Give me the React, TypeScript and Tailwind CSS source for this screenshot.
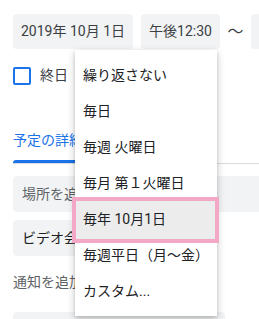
import React from 'react'

const repeatOptions = [
  '繰り返さない',
  '毎日',
  '毎週 火曜日',
  '毎月 第１火曜日',
  '毎年 10月1日',
  '毎週平日（月〜金）',
  'カスタム...',
]

export default function App() {
  const selected = 4

  return (
    <div
      className="relative w-[259px] h-[319px] overflow-hidden bg-white text-[14px] text-[#3c4043]"
      style={{ fontFamily: 'Roboto, "Noto Sans CJK JP", sans-serif' }}
    >
      <div className="pl-[13px] pt-[14px]">
        {/* date / time row */}
        <div className="flex items-center">
          <div className="shrink-0 h-[35px] px-2 flex items-center rounded bg-[#f1f3f4]">2019年 10月 1日</div>
          <div className="shrink-0 ml-2 h-[35px] px-2 flex items-center rounded bg-[#f1f3f4]">午後12:30</div>
          <div className="shrink-0 w-[31px] text-center text-[16px]">〜</div>
          <div className="shrink-0 h-[35px] px-2 flex items-center rounded bg-[#f1f3f4]">午後1:30</div>
        </div>

        {/* all day */}
        <div className="mt-4 flex items-center gap-[9px]">
          <div className="w-[18px] h-[18px] rounded-[2px] border-2 border-[#1a73e8]" />
          <span>終日</span>
        </div>

        {/* tabs */}
        <div className="mt-[34px] flex border-b border-[#dadce0]">
          <div className="flex flex-col">
            <div className="h-[40px] pr-4 flex items-center text-[#1a73e8]">予定の詳細</div>
            <div className="h-[3px] rounded-t-[3px] bg-[#1a73e8]" />
          </div>
        </div>

        <div className="mt-3 h-[36px] px-[9px] flex items-center rounded-l bg-[#f1f3f4] text-[#5f6368]">場所を追加</div>
        <div className="mt-2 w-[200px] h-[36px] px-[9px] flex items-center rounded bg-[#f1f3f4] text-[#202124]">
          ビデオ会議を追加
        </div>
        <div className="mt-4 h-[20px] flex items-center text-[#5f6368]">通知を追加</div>
        <div className="mt-5 w-[212px] h-[30px] rounded bg-[#f1f3f4] flex pl-[172px] pt-[7px]">
          <div className="w-[10px] h-[10px] rounded-full bg-[#7b1fa2]" />
        </div>
      </div>

      {/* repeat menu */}
      <div className="absolute left-[75px] top-[50px] w-[142px] bg-white py-[7px] shadow-[0_3px_8px_rgba(0,0,0,0.22),0_1px_3px_rgba(0,0,0,0.12)]">
        {repeatOptions.map((opt, i) => (
          <div key={opt} className="relative h-[36px] px-2 flex items-center text-[#202124] whitespace-nowrap">
            {i === selected && (
              <div className="absolute -left-[3px] -right-[2px] -top-[4px] -bottom-[6px] border-4 border-[#f3a8c8] bg-[#ececec]" />
            )}
            <span className="relative">{opt}</span>
          </div>
        ))}
      </div>
    </div>
  )
}
